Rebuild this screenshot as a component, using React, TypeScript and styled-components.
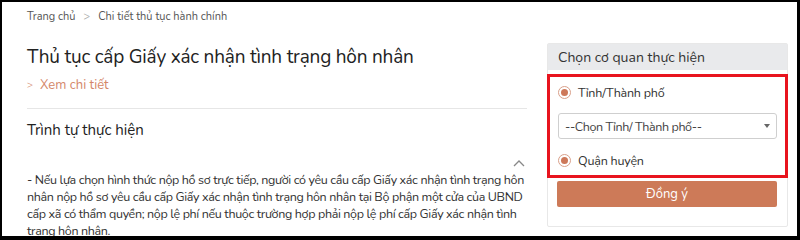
import React from 'react';
import styled, { createGlobalStyle } from 'styled-components';

const GlobalStyle = createGlobalStyle`
  html, body {
    margin: 0;
    padding: 0;
    background: #000;
  }
  * {
    box-sizing: border-box;
  }
`;

const Frame = styled.div`
  width: 800px;
  height: 240px;
  overflow: hidden;
  background: #fff;
  border-style: solid;
  border-color: #000;
  border-width: 2px 3px 4px 2px;
  font-family: 'Nunito', 'Lato', 'Noto Sans', sans-serif;
  color: #333;
`;

const Breadcrumb = styled.div`
  display: flex;
  align-items: center;
  gap: 8px;
  padding: 6px 0 0 25px;
  height: 22px;
  font-size: 11px;
  color: #555;
`;

const Sep = styled.span`
  color: #aaa;
`;

const Body = styled.div`
  display: flex;
  gap: 20px;
  padding: 0 0 0 25px;
  margin-top: 19px;
`;

const Main = styled.div`
  width: 500px;
`;

const Title = styled.h1`
  margin: 0;
  font-size: 19px;
  letter-spacing: -0.2px;
  font-weight: 400;
  line-height: 28px;
  color: #222;
`;

const MoreLink = styled.a`
  display: flex;
  align-items: center;
  gap: 7px;
  margin-top: 5px;
  font-size: 13px;
  color: #d4876a;
  text-decoration: none;
`;

const Chevron = styled.span`
  font-size: 10px;
`;

const Divider = styled.hr`
  margin: 14px 0 0;
  border: none;
  border-top: 1px solid #e6e6e6;
`;

const SectionTitle = styled.h2`
  margin: 10px 0 0;
  font-size: 15px;
  font-weight: 400;
  line-height: 22px;
  color: #222;
`;

const Toggle = styled.div`
  display: flex;
  justify-content: flex-end;
  padding-right: 2px;
  margin-top: 18px;
  height: 12px;
  color: #888;
`;

const Paragraph = styled.p`
  margin: 0;
  font-size: 12.5px;
  letter-spacing: -0.35px;
  line-height: 17px;
  color: #333;
  white-space: nowrap;
`;

const Side = styled.aside`
  width: 241px;
  height: 184px;
  border: 1px solid #e8e8e8;
  border-radius: 2px;
`;

const SideHeader = styled.div`
  height: 26px;
  padding: 0 10px;
  display: flex;
  align-items: center;
  background: #e9eaec;
  font-size: 14px;
  color: #333;
`;

const Highlight = styled.div`
  margin: 4px -1px 0 -1px;
  border: 3px solid #e8141e;
  padding: 5px 8px 5px 8px;
`;

const RadioRow = styled.label`
  display: flex;
  align-items: center;
  gap: 7px;
  height: 20px;
  font-size: 12.5px;
  letter-spacing: -0.2px;
  color: #333;
`;

const RadioDot = styled.span`
  width: 13px;
  height: 13px;
  border-radius: 50%;
  border: 1px solid #d9a08a;
  display: flex;
  align-items: center;
  justify-content: center;
  &::after {
    content: '';
    width: 7px;
    height: 7px;
    border-radius: 50%;
    background: #cd7859;
  }
`;

const Select = styled.div`
  margin: 11px 0 11px;
  height: 26px;
  border: 1px solid #cfcfcf;
  border-radius: 3px;
  padding: 0 6px;
  display: flex;
  align-items: center;
  justify-content: space-between;
  font-size: 12.5px;
  letter-spacing: -0.4px;
  color: #444;
`;

const Caret = styled.span`
  width: 0;
  height: 0;
  border-left: 3.5px solid transparent;
  border-right: 3.5px solid transparent;
  border-top: 4px solid #666;
`;

const Submit = styled.button`
  display: block;
  width: 220px;
  height: 26px;
  margin: 3px 0 0 9px;
  border: none;
  border-radius: 2px;
  background: #cd7a58;
  color: #fff;
  font-family: inherit;
  font-size: 13px;
`;

const lines = [
  '- Nếu lựa chọn hình thức nộp hồ sơ trực tiếp, người có yêu cầu cấp Giấy xác nhận tình trạng hôn',
  'nhân nộp hồ sơ yêu cầu cấp Giấy xác nhận tình trạng hôn nhân tại Bộ phận một cửa của UBND',
  'cấp xã có thẩm quyền; nộp lệ phí nếu thuộc trường hợp phải nộp lệ phí cấp Giấy xác nhận tình',
  'trạng hôn nhân.',
];

export default function App() {
  return (
    <>
      <GlobalStyle />
      <Frame>
        <Breadcrumb>
          <span>Trang chủ</span>
          <Sep>&gt;</Sep>
          <span>Chi tiết thủ tục hành chính</span>
        </Breadcrumb>
        <Body>
          <Main>
            <Title>Thủ tục cấp Giấy xác nhận tình trạng hôn nhân</Title>
            <MoreLink href="#">
              <Chevron>&gt;</Chevron>
              Xem chi tiết
            </MoreLink>
            <Divider />
            <SectionTitle>Trình tự thực hiện</SectionTitle>
            <Toggle>
              <svg width="12" height="8" viewBox="0 0 12 8" fill="none" stroke="#888" strokeWidth="1.3">
                <path d="M1 7 L6 2 L11 7" />
              </svg>
            </Toggle>
            <Paragraph>
              {lines.map((l, i) => (
                <React.Fragment key={i}>
                  {l}
                  {i < lines.length - 1 && <br />}
                </React.Fragment>
              ))}
            </Paragraph>
          </Main>
          <Side>
            <SideHeader>Chọn cơ quan thực hiện</SideHeader>
            <Highlight>
              <RadioRow>
                <RadioDot />
                Tỉnh/Thành phố
              </RadioRow>
              <Select>
                <span>--Chọn Tỉnh/ Thành phố--</span>
                <Caret />
              </Select>
              <RadioRow>
                <RadioDot />
                Quận huyện
              </RadioRow>
            </Highlight>
            <Submit>Đồng ý</Submit>
          </Side>
        </Body>
      </Frame>
    </>
  );
}
